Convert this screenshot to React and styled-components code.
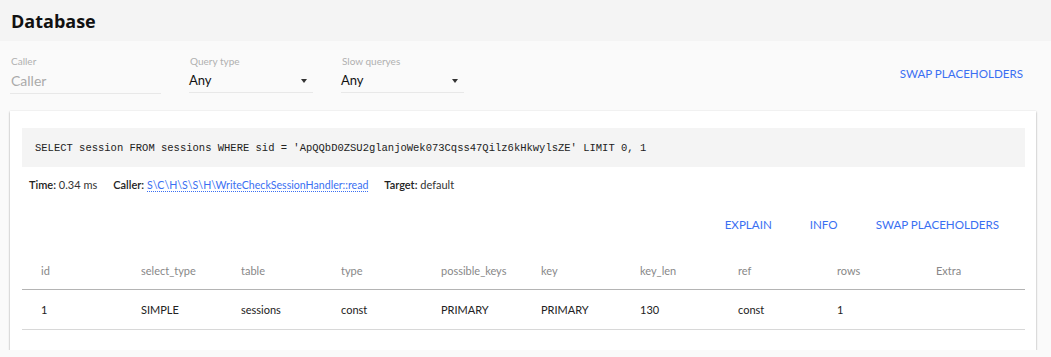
import React from 'react';
import styled, { createGlobalStyle } from 'styled-components';

const GlobalStyle = createGlobalStyle`
  body {
    margin: 0;
    background: #fafafa;
    font-family: Lato, "Liberation Sans", sans-serif;
    color: #222;
  }
`;

const columns = [
  { name: 'id', width: 100 },
  { name: 'select_type', width: 100 },
  { name: 'table', width: 100 },
  { name: 'type', width: 100 },
  { name: 'possible_keys', width: 100 },
  { name: 'key', width: 99 },
  { name: 'key_len', width: 98 },
  { name: 'ref', width: 99 },
  { name: 'rows', width: 99 },
  { name: 'Extra', width: null },
];

const rows = [['1', 'SIMPLE', 'sessions', 'const', 'PRIMARY', 'PRIMARY', '130', 'const', '1', '']];

const query =
  "SELECT session FROM sessions WHERE sid = 'ApQQbD0ZSU2glanjoWek073Cqss47Qilz6kHkwylsZE' LIMIT 0, 1";

const template = columns.map((c) => (c.width ? c.width + 'px' : '1fr')).join(' ');

export default function App() {
  return (
    <>
      <GlobalStyle />
      <Header>
        <Title>Database</Title>
      </Header>

      <Filters>
        <Field width={151}>
          <Label>Caller</Label>
          <Input placeholder="Caller" />
        </Field>
        <Field width={124}>
          <Label>Query type</Label>
          <Select>
            <span>Any</span>
            <Caret />
          </Select>
        </Field>
        <Field width={123}>
          <Label>Slow queryes</Label>
          <Select>
            <span>Any</span>
            <Caret />
          </Select>
        </Field>
        <Spacer />
        <FlatButton>SWAP PLACEHOLDERS</FlatButton>
      </Filters>

      <Card>
        <Code>{query}</Code>
        <Meta>
          <MetaItem>
            <b>Time:</b> 0.34 ms
          </MetaItem>
          <MetaItem>
            <b>Caller:</b> <CallerLink href="#">S\C\H\S\S\H\WriteCheckSessionHandler::read</CallerLink>
          </MetaItem>
          <MetaItem>
            <b>Target:</b> default
          </MetaItem>
        </Meta>
        <Actions>
          <FlatButton>EXPLAIN</FlatButton>
          <FlatButton>INFO</FlatButton>
          <FlatButton>SWAP PLACEHOLDERS</FlatButton>
        </Actions>
        <Table>
          <HeadRow>
            {columns.map((c) => (
              <HeadCell key={c.name}>{c.name}</HeadCell>
            ))}
          </HeadRow>
          {rows.map((r, i) => (
            <BodyRow key={i}>
              {r.map((v, j) => (
                <Cell key={j}>{v}</Cell>
              ))}
            </BodyRow>
          ))}
        </Table>
      </Card>
    </>
  );
}

const Header = styled.header`
  height: 41px;
  background: #f4f4f4;
  display: flex;
  align-items: center;
  padding-left: 11px;
`;

const Title = styled.h1`
  margin: 0;
  font-size: 18px;
  font-weight: 700;
  color: #111;
  font-family: "Open Sans", Lato, sans-serif;
`;

const Filters = styled.div`
  display: flex;
  align-items: flex-start;
  gap: 28px;
  padding: 14px 9px 0 10px;
  height: 56px;
`;

const Field = styled.div`
  width: ${(p) => p.width}px;
  display: flex;
  flex-direction: column;
`;

const Label = styled.label`
  font-size: 10px;
  line-height: 12px;
  color: #b0b0b0;
  padding-left: 1px;
`;

const Input = styled.input`
  border: 0;
  border-bottom: 1px solid #e8e8e8;
  background: transparent;
  height: 26px;
  padding: 0 1px;
  font: inherit;
  font-size: 14px;
  outline: none;
  &::placeholder {
    color: #aaa;
  }
`;

const Select = styled.div`
  height: 25px;
  border-bottom: 1px solid #e8e8e8;
  display: flex;
  align-items: center;
  justify-content: space-between;
  font-size: 13px;
  color: #111;
  padding: 0 6px 0 0;
`;

const Caret = styled.span`
  width: 0;
  height: 0;
  border-left: 3.5px solid transparent;
  border-right: 3.5px solid transparent;
  border-top: 4px solid #333;
  margin-top: 2px;
`;

const Spacer = styled.div`
  flex: 1;
`;

const FlatButton = styled.button`
  border: 0;
  background: transparent;
  color: #3a6ff2;
  font-family: Lato, sans-serif;
  font-size: 11.6px;
  height: 36px;
  padding: 0 19px;
  cursor: pointer;
`;

const Card = styled.section`
  margin: 0 15px 0 10px;
  background: #fff;
  box-shadow: 0 1px 2px rgba(0, 0, 0, 0.35), 0 0 1px rgba(0, 0, 0, 0.08);
  padding: 17px 11px 20px 12px;
`;

const Code = styled.pre`
  margin: 0;
  height: 39px;
  display: flex;
  align-items: center;
  padding: 0 13px;
  background: #f4f4f4;
  font-family: "Liberation Mono", monospace;
  font-size: 10.5px;
  color: #222;
`;

const Meta = styled.div`
  display: flex;
  gap: 16px;
  margin-top: 11px;
  padding-left: 7px;
  font-size: 11px;
  line-height: 14px;
  color: #333;
  b {
    font-weight: 600;
    color: #222;
  }
`;

const MetaItem = styled.span``;

const CallerLink = styled.a`
  color: #3a6ff2;
  text-decoration: none;
  border-bottom: 1px dotted #3a6ff2;
  font-size: 10.6px;
`;

const Actions = styled.div`
  display: flex;
  justify-content: flex-end;
  margin-top: 14px;
  padding-right: 7px;
`;

const Table = styled.div`
  margin-top: 9px;
`;

const HeadRow = styled.div`
  display: grid;
  grid-template-columns: ${template};
  height: 38px;
  align-items: center;
  border-bottom: 1px solid #b4b4b4;
`;

const BodyRow = styled(HeadRow)`
  height: 39px;
  border-bottom: 1px solid #d8d8d8;
`;

const HeadCell = styled.div`
  padding-left: 19px;
  font-size: 11px;
  color: #888;
`;

const Cell = styled(HeadCell)`
  color: #222;
`;
